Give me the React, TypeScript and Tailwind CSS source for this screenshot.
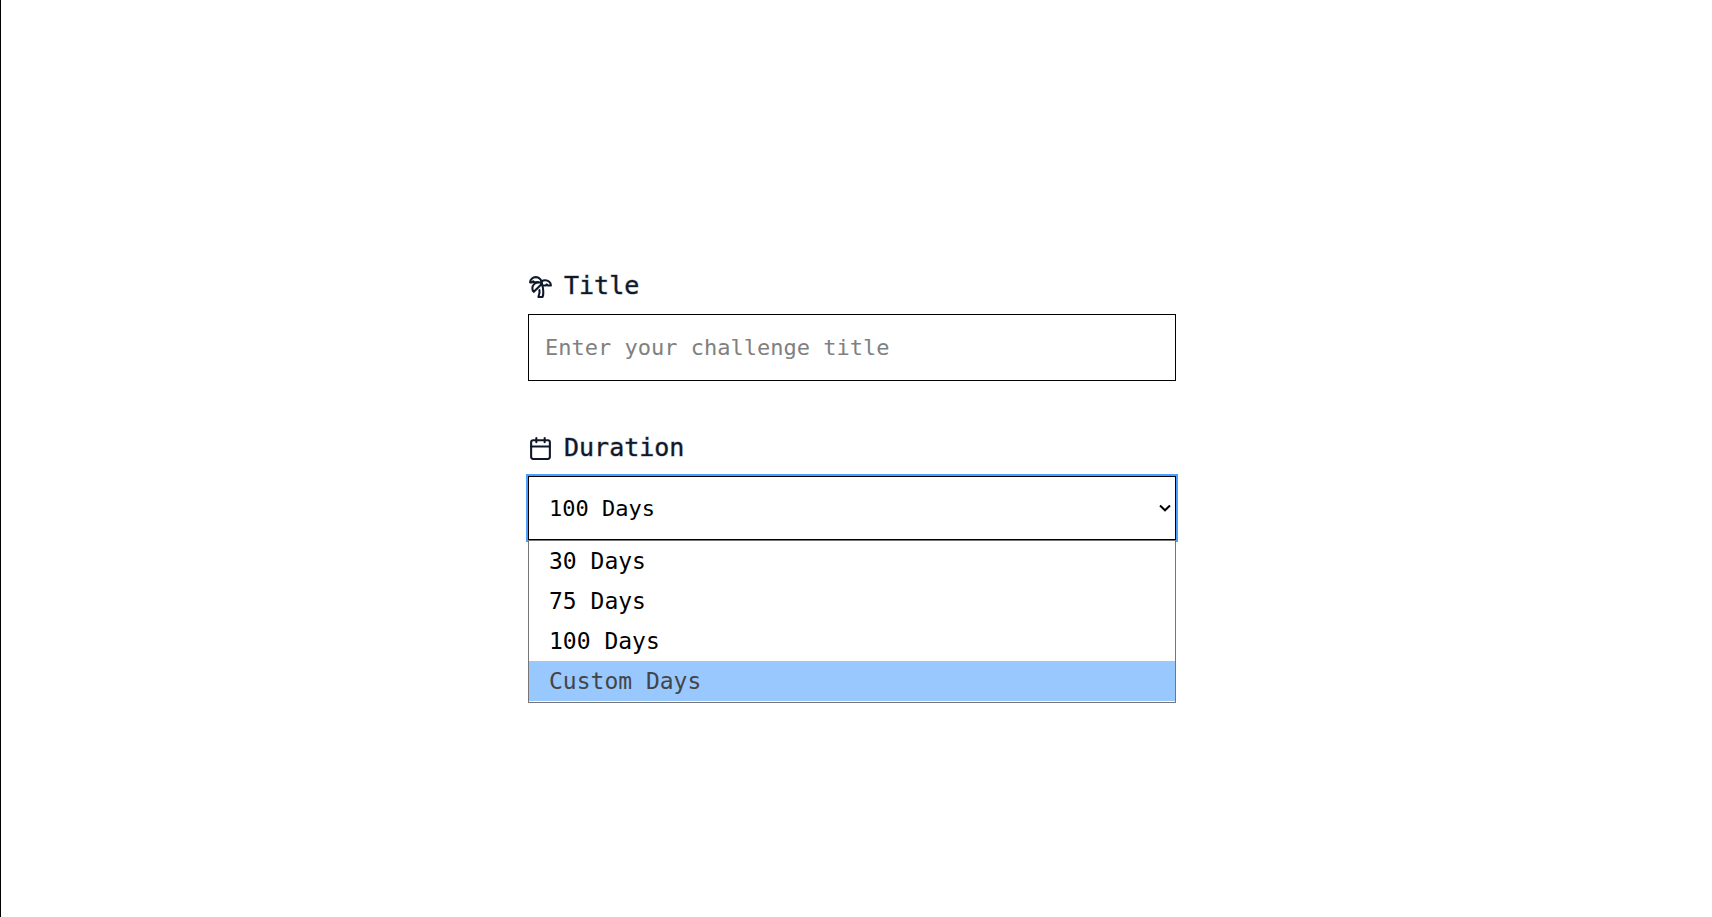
import { useState } from "react";
import { Calendar, TreePalm } from "lucide-react";

const durations = ["30 Days", "75 Days", "100 Days", "Custom Days"];

export default function App() {
  const [title, setTitle] = useState("");
  const [duration, setDuration] = useState("100 Days");

  return (
    <main className="flex min-h-screen items-center justify-center border-l border-black bg-white pr-[9px] pb-[109px] font-['DejaVu_Sans_Mono',monospace] text-black">
      <form className="flex w-full max-w-[648px] flex-col gap-[49px]">
        <div className="flex flex-col gap-[10px]">
          <label htmlFor="title" className="flex h-9 items-center gap-[11px] text-[25px] leading-9 text-slate-900 [-webkit-text-stroke:1px_#0f172a66]">
            <TreePalm size={25} aria-hidden="true" />
            Title
          </label>
          <input
            id="title"
            type="text"
            value={title}
            onChange={(e) => setTitle(e.target.value)}
            placeholder="Enter your challenge title"
            className="h-[67px] w-full border border-black bg-white px-4 text-[22px] outline-none placeholder:text-[#808080]"
          />
        </div>

        <div className="flex flex-col gap-[10px]">
          <label htmlFor="duration" className="flex h-9 items-center gap-[11px] text-[25px] leading-9 text-slate-900 [-webkit-text-stroke:1px_#0f172a66]">
            <Calendar size={25} aria-hidden="true" />
            Duration
          </label>
          <div className="relative">
            <select
              id="duration"
              value={duration}
              onChange={(e) => setDuration(e.target.value)}
              className="block h-16 w-full appearance-none border border-black bg-white px-5 text-[22px] ring-2 ring-[#4d9fff] outline-none"
            >
              {durations.map((d) => (
                <option key={d}>{d}</option>
              ))}
            </select>
            <svg
              viewBox="0 0 12 8"
              className="pointer-events-none absolute top-7 right-[5px] h-2 w-3"
              fill="none"
              stroke="black"
              strokeWidth="2"
              aria-hidden="true"
            >
              <path d="M1 1.5 6 6.3 11 1.5" />
            </svg>
            <ul role="listbox" aria-label="Duration" className="absolute top-full left-0 w-full border border-[#767676] bg-white pb-px">
              {durations.map((d) => (
                <li
                  key={d}
                  role="option"
                  aria-selected={d === duration}
                  onClick={() => setDuration(d)}
                  className={
                    d === "Custom Days"
                      ? "h-10 bg-[#99c8ff] px-5 text-[23px] leading-10 text-[#444444]"
                      : "h-10 px-5 text-[23px] leading-10"
                  }
                >
                  {d}
                </li>
              ))}
            </ul>
          </div>
        </div>
      </form>
    </main>
  );
}
